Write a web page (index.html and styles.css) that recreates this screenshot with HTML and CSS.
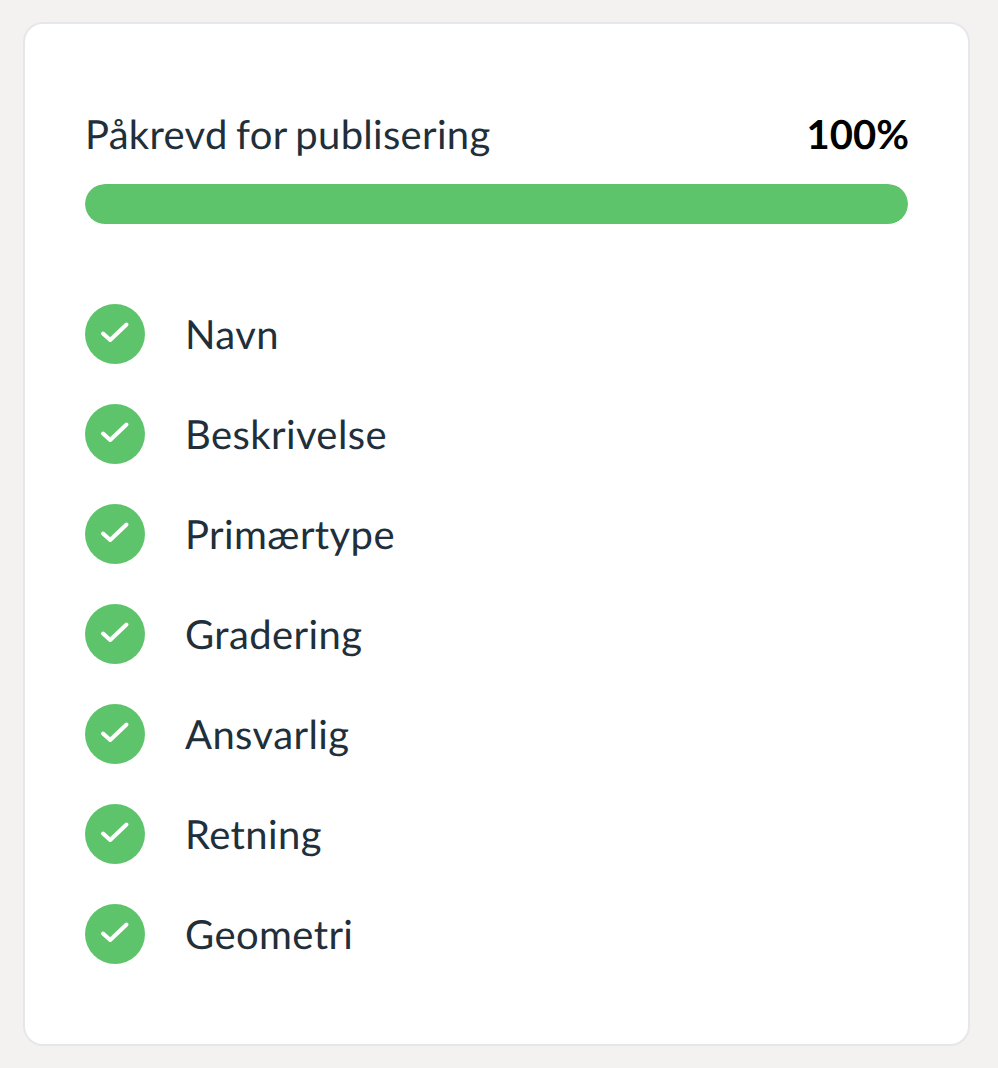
FILE: index.html
```html
<!DOCTYPE html>
<html lang="no">
<head>
<meta charset="utf-8">
<title>Påkrevd for publisering</title>
<link rel="stylesheet" href="styles.css">
</head>
<body>
<main class="card">
  <div class="header">
    <span class="title">Påkrevd for publisering</span>
    <span class="percent">100%</span>
  </div>
  <div class="track"><div class="fill" style="width:100%"></div></div>
  <ul class="list">
    <li class="item"><svg class="check" viewBox="0 0 60 60"><circle cx="30" cy="30" r="30"/><path d="M18 29.5 L25.2 36 L41.5 20.5"/></svg><span>Navn</span></li>
    <li class="item"><svg class="check" viewBox="0 0 60 60"><circle cx="30" cy="30" r="30"/><path d="M18 29.5 L25.2 36 L41.5 20.5"/></svg><span>Beskrivelse</span></li>
    <li class="item"><svg class="check" viewBox="0 0 60 60"><circle cx="30" cy="30" r="30"/><path d="M18 29.5 L25.2 36 L41.5 20.5"/></svg><span>Primærtype</span></li>
    <li class="item"><svg class="check" viewBox="0 0 60 60"><circle cx="30" cy="30" r="30"/><path d="M18 29.5 L25.2 36 L41.5 20.5"/></svg><span>Gradering</span></li>
    <li class="item"><svg class="check" viewBox="0 0 60 60"><circle cx="30" cy="30" r="30"/><path d="M18 29.5 L25.2 36 L41.5 20.5"/></svg><span>Ansvarlig</span></li>
    <li class="item"><svg class="check" viewBox="0 0 60 60"><circle cx="30" cy="30" r="30"/><path d="M18 29.5 L25.2 36 L41.5 20.5"/></svg><span>Retning</span></li>
    <li class="item"><svg class="check" viewBox="0 0 60 60"><circle cx="30" cy="30" r="30"/><path d="M18 29.5 L25.2 36 L41.5 20.5"/></svg><span>Geometri</span></li>
  </ul>
</main>
</body>
</html>
```
FILE: styles.css
```css
html, body { margin: 0; padding: 0; }
body {
  background: #f3f2f0;
  font-family: Lato, sans-serif;
  color: #212f3a;
  height: 1068px;
  overflow: hidden;
  padding: 22px 28px 0 23px;
  box-sizing: border-box;
  text-rendering: geometricPrecision;
}
.card {
  box-sizing: border-box;
  height: 1024px;
  background: #fff;
  border: 2px solid #e6e7ea;
  border-radius: 20px;
  padding: 80px 60px;
}
.header {
  display: flex;
  justify-content: space-between;
  align-items: center;
  height: 60px;
  margin-bottom: 20px;
}
.title { font-size: 40px; line-height: 60px; letter-spacing: 0.3px; word-spacing: -2px; }
.percent { font-size: 40px; line-height: 60px; font-weight: 700; color: #000; margin-right: -1px; }
.track { height: 40px; border-radius: 20px; background: #e6e7ea; overflow: hidden; }
.fill { height: 100%; background: #5ec46b; border-radius: 20px; }
.list {
  list-style: none;
  margin: 80px 0 0;
  padding: 0;
  display: flex;
  flex-direction: column;
  gap: 40px;
}
.item {
  display: flex;
  align-items: center;
  gap: 40px;
  height: 60px;
  font-size: 40px;
  line-height: 60px;
  letter-spacing: 0.4px;
}
.check { width: 60px; height: 60px; flex: none; display: block; }
.check circle { fill: #5ec46b; }
.check path { fill: none; stroke: #fff; stroke-width: 4; stroke-linecap: round; stroke-linejoin: round; }
```
